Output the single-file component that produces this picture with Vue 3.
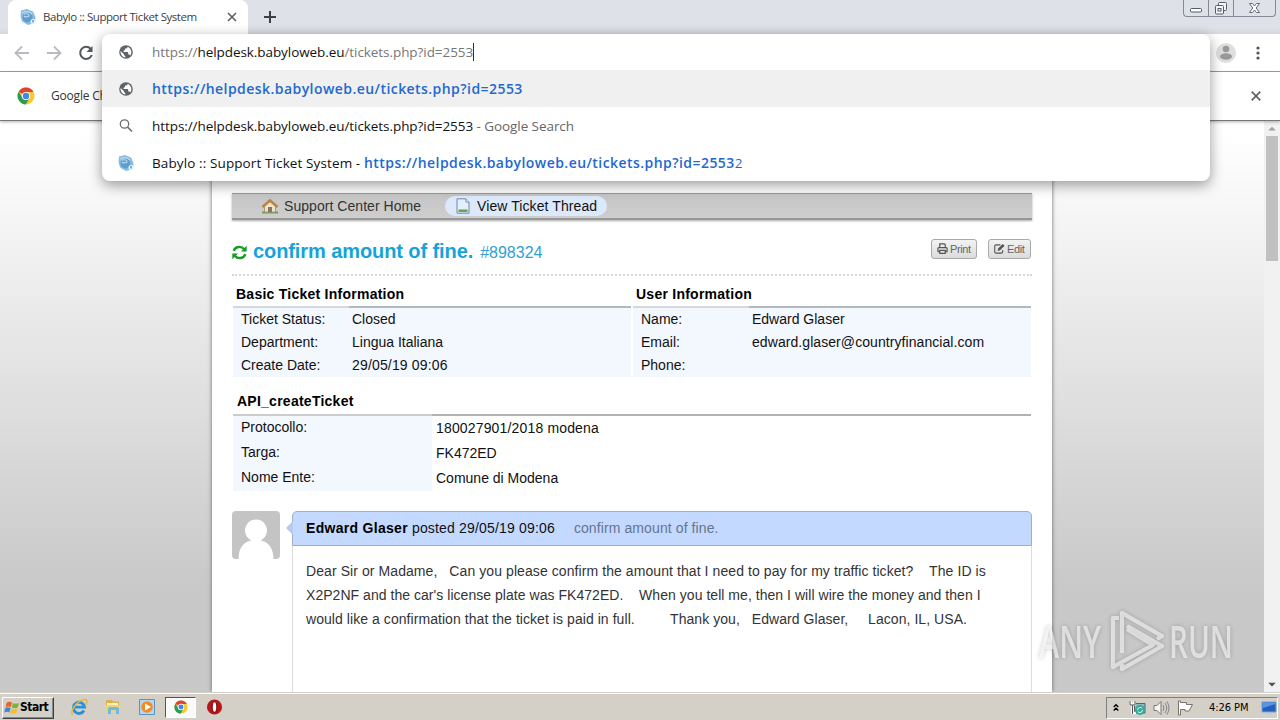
<template>
    <div class="screen">
        <!-- Pestañas del navegador -->
        <header class="tabstrip">
            <div class="tab">
                <svg class="favicon" viewBox="0 0 16 16"><use href="#babylo" /></svg>
                <span class="tab-title">Babylo :: Support Ticket System</span>
                <svg class="tab-close" viewBox="0 0 10 10"><path d="M1 1L9 9M9 1L1 9" stroke="#5f6368" stroke-width="1.7" /></svg>
            </div>
            <svg class="new-tab" viewBox="0 0 12 12"><path d="M6 0V12M0 6H12" stroke="#3c4043" stroke-width="2" /></svg>
            <div class="window-buttons">
                <span class="minimize"><svg width="14" height="16"><rect x="1.5" y="8.500" width="11" height="3.500" rx="1" fill="#fff" stroke="#555b6e" /></svg></span>
                <span class="restore"><svg width="14" height="16"><g fill="#f6f6f8" stroke="#555b6e"><rect x="4.500" y="2.500" width="8" height="8" rx="1" /><rect x="1.500" y="5.500" width="8" height="8.500" rx="1" /><rect x="4" y="8.500" width="3" height="2.500" /></g></svg></span>
                <span class="close"><svg width="13" height="16"><path d="M1.500 3.500H4.500L6.500 6L8.500 3.500H11.500L8.200 8L11.500 12.500H8.500L6.500 10L4.500 12.500H1.500L4.800 8Z" fill="#fff" stroke="#666b7b" /></svg></span>
            </div>
        </header>

        <div class="toolbar">
            <svg class="nav-icon" viewBox="0 0 16 16"><path d="M15 8H2M8 1.500L1.500 8L8 14.500" fill="none" stroke="#b9bbbe" stroke-width="1.800" /></svg>
            <svg class="nav-icon" viewBox="0 0 16 16"><path d="M1 8H14M8 1.500L14.500 8L8 14.500" fill="none" stroke="#b9bbbe" stroke-width="1.800" /></svg>
            <svg class="nav-icon" viewBox="0 0 16 16"><path d="M12.600 3.800A6 6 0 1 0 13.800 10" fill="none" stroke="#55585c" stroke-width="2" /><path d="M14.500 1V7H8.500Z" fill="#55585c" /></svg>
            <svg class="avatar-icon" viewBox="0 0 20 20"><circle cx="10" cy="10" r="10" fill="#dedede" /><circle cx="10" cy="6" r="3.300" fill="#999" /><ellipse cx="10" cy="13.500" rx="6" ry="3.300" fill="#999" /></svg>
            <svg class="dots-icon" viewBox="0 0 4 14"><g fill="#505357"><circle cx="2" cy="2" r="1.600" /><circle cx="2" cy="7" r="1.600" /><circle cx="2" cy="12" r="1.600" /></g></svg>
        </div>

        <div class="infobar">
            <svg class="chrome-icon" viewBox="0 0 18 18"><use href="#chrome" /></svg>
            <span>Google Ch</span>
            <svg class="infobar-close" viewBox="0 0 10 10"><path d="M.7.700L9.300 9.300M9.300.700L.7 9.300" stroke="#5f6368" stroke-width="1.700" /></svg>
        </div>

        <!-- Sugerencias de la barra de direcciones -->
        <div class="omnibox">
            <div class="omni-row input">
                <svg class="omni-icon" viewBox="0 0 16 16"><use href="#globe" /></svg>
                <span class="url"><i>https://</i>helpdesk.babyloweb.eu<i>/tickets.php?id=2553</i></span><span class="caret"></span>
            </div>
            <div class="omni-row selected">
                <svg class="omni-icon" viewBox="0 0 16 16"><use href="#globe" /></svg>
                <b>https://helpdesk.babyloweb.eu/tickets.php?id=2553</b>
            </div>
            <div class="omni-row">
                <svg class="omni-icon" viewBox="0 0 16 16"><circle cx="6.500" cy="6" r="4.200" fill="none" stroke="#6b6e72" stroke-width="1.300" /><path d="M9.500 9L14 13.500" stroke="#6b6e72" stroke-width="1.700" /></svg>
                <span class="url">https://helpdesk.babyloweb.eu/tickets.php?id=2553</span><span class="hint">&nbsp;- Google Search</span>
            </div>
            <div class="omni-row">
                <svg class="omni-icon" viewBox="0 0 16 16"><use href="#babylo" /></svg>
                <span class="page-title">Babylo :: Support Ticket System -&nbsp;</span><b>https://helpdesk.babyloweb.eu/tickets.php?id=2553</b><span class="last-digit">2</span>
            </div>
        </div>

        <main class="viewport">
            <div class="page">
                <div class="container">
                    <nav class="menu">
                        <a class="menu-home">
                            <svg viewBox="0 0 18 16"><path d="M1 14.500H17" stroke="#6f9f55" stroke-width="2" /><path d="M3.500 8L9 3L14.500 8V14H3.500Z" fill="#eee4cc" stroke="#a8987a" /><path d="M7 14V9H11V14" fill="#887660" /><path d="M1.500 9L9 2.500L16.500 9" fill="none" stroke="#b98545" stroke-width="2.600" /></svg>
                            <span>Support Center Home</span>
                        </a>
                        <a class="menu-thread">
                            <svg viewBox="0 0 14 16"><path d="M1 .800H10L13 4V15.200H1Z" fill="#e3effc" stroke="#7188a8" /><path d="M10 1V4H13" fill="#fff" stroke="#7188a8" /><path d="M2.500 11.500H11.500V14H2.500Z" fill="#69a348" /></svg>
                            <span>View Ticket Thread</span>
                        </a>
                    </nav>

                    <div class="title-row">
                        <svg class="refresh" viewBox="0 0 14 14"><g fill="none" stroke="#149d25" stroke-width="2.300"><path d="M1.600 5.500C3 1.200 8.500.600 11.200 3.800" /><path d="M12.400 8.500C11 12.800 5.500 13.400 2.800 10.200" /></g><path d="M13.700.700V6H8.400ZM.3 13.300V8H5.600Z" fill="#149d25" /></svg>
                        <h1>confirm amount of fine.</h1>
                        <small>#898324</small>
                        <button class="print"><svg viewBox="0 0 12 12"><path d="M3 5V1H8L9 2V5M1 9.500V6Q1 5 2 5H10Q11 5 11 6V9.500H9M3 9.500H1M3 8H9V11.300H3Z" fill="none" stroke="#555" stroke-width="1.300" /></svg><span>Print</span></button>
                        <button class="edit"><svg viewBox="0 0 12 12"><path d="M9.500 7.500V9.500Q9.500 11 8 11H2.300Q.8 11 .8 9.500V3.500Q.8 2 2.300 2H7" fill="none" stroke="#555" stroke-width="1.200" /><path d="M4 8.800L4.500 6L9.500 1L11.600 3L6.600 8Z" fill="#555" /></svg><span>Edit</span></button>
                    </div>

                    <div class="info-tables">
                        <section v-for="table in infoTables" :key="table.title" class="info-table">
                            <h2>{{ table.title }}</h2>
                            <dl>
                                <div v-for="row in table.rows" :key="row.label">
                                    <dt>{{ row.label }}</dt>
                                    <dd :class="row.name">{{ row.value }}</dd>
                                </div>
                            </dl>
                        </section>
                    </div>

                    <section class="custom-table">
                        <h2>API_createTicket</h2>
                        <dl>
                            <div v-for="row in customRows" :key="row.label">
                                <dt>{{ row.label }}</dt>
                                <dd :class="row.name">{{ row.value }}</dd>
                            </div>
                        </dl>
                    </section>

                    <article class="entry">
                        <svg class="user-avatar" viewBox="0 0 48 48"><rect width="48" height="48" rx="4" fill="#c4c4c4" /><path d="M6.500 48C6.500 36 13 30 19.500 29.500A11 11 0 1 1 28.500 29.500C35 30 41.500 36 41.500 48Z" fill="#fff" /></svg>
                        <div class="message">
                            <div class="message-header">
                                <b>Edward Glaser</b><span class="posted">posted 29/05/19 09:06</span><span class="subject">confirm amount of fine.</span>
                            </div>
                            <div class="message-body">
                                <p v-for="(line, i) in messageLines" :key="i" :class="'line-'+(i+1)">{{ line }}</p>
                            </div>
                        </div>
                    </article>
                </div>
            </div>
            <div class="scrollbar">
                <svg viewBox="0 0 16 16"><path d="M4 10L8 6L12 10Z" fill="#a0a0a0" /></svg>
                <div class="thumb"></div>
                <svg class="down" viewBox="0 0 16 16"><path d="M4 6L8 10L12 6Z" fill="#505050" /></svg>
            </div>
        </main>

        <!-- Marca de agua -->
        <svg class="watermark" viewBox="0 0 200 80">
            <g class="watermark-text">
                <text x="3" y="53" textLength="62" lengthAdjust="spacingAndGlyphs">ANY</text>
                <text x="133" y="53" textLength="64" lengthAdjust="spacingAndGlyphs">RUN</text>
            </g>
            <path class="watermark-logo" d="M83 13L77 13V62L117 40L91 24M86 48V8L126 31L121 34M86 59V64L126 41L91 21" />
        </svg>

        <footer class="taskbar">
            <div class="start">
                <svg viewBox="0 0 18 16"><path d="M3 2Q6 0 9 2L7.700 7Q5 5.500 1.800 7Z" fill="#e8642a" /><path d="M10 2.500Q13 4 17 2.500L15.500 7.500Q12 9 8.700 7.300Z" fill="#79b43c" /><path d="M1.500 8Q4.500 6.500 7.500 8L6 13Q3.500 11.500 .3 13Z" fill="#3c8bd0" /><path d="M8.500 8.500Q12 10 15.300 8.600L14 13.600Q10.500 15 7 13.500Z" fill="#f3bd2d" /></svg>
                <b>Start</b>
            </div>
            <svg class="task ie" viewBox="0 0 18 18"><path d="M14 12.500A5.600 5.600 0 1 1 14.600 9.200H5" fill="none" stroke="#2c8fd8" stroke-width="2.800" /><path d="M3 16.500C-1 15 6 3 14.500 1.500C17.500 1 17.500 4 16 6.500" fill="none" stroke="#e2b93c" stroke-width="1.500" /></svg>
            <svg class="task folder" viewBox="0 0 18 18"><path d="M2 2H8L9 3.500H15V14H2Z" fill="#d9b24e" /><path d="M3 5H14V9H3Z" fill="#fff3bd" /><path d="M1 7H16L15 14H2Z" fill="#f0d27a" /><path d="M4 16V11Q4 9 6 9H13Q15 9 15 11V16H12V12H7V16Z" fill="#6ebbe2" /></svg>
            <svg class="task media" viewBox="0 0 18 18"><path d="M1.500 1.500H16.500V16.500H1.500Z" fill="#b3d7f3" stroke="#5c91c2" /><circle cx="9" cy="9" r="5.800" fill="#f08c20" /><path d="M7 5.500L13 9L7 12.500Z" fill="#fff" /></svg>
            <div class="task active"><svg viewBox="0 0 18 18"><use href="#chrome" /></svg></div>
            <svg class="task opera" viewBox="0 0 18 18"><circle cx="9" cy="9" r="8" fill="#b6171b" /><ellipse cx="9" cy="9" rx="3.300" ry="6.200" fill="#8b1013" /><ellipse cx="9" cy="9" rx="1.800" ry="5" fill="#fff" /></svg>
            <div class="tray">
                <svg class="chevrons" viewBox="0 0 7 9"><path d="M.8 4L3.500 1.300L6.200 4M.8 8L3.500 5.300L6.200 8" fill="none" stroke="#000" stroke-width="1.500" /></svg>
                <svg class="network" viewBox="0 0 17 16"><path d="M5.500 3.500H16V13H5.500Z" fill="#8fb6bd" stroke="#53636a" /><path d="M1.500 1V4.500H5.500V1M3.500 4.500V13H7" fill="none" stroke="#fff" stroke-width="2.500" /><path d="M1 1V5H6V1M3.500 5V14" fill="none" stroke="#555" /><circle cx="11" cy="10" r="5" fill="#37aa9b" /><path d="M8.500 10A2.600 2.600 0 0 1 13.200 8.500M13.500 10A2.600 2.600 0 0 1 8.800 11.500" fill="none" stroke="#d7fff9" /></svg>
                <svg class="sound" viewBox="0 0 17 16"><path d="M1 5.500H4L8 1.500V14.500L4 10.500H1Z" fill="#f5f4ef" stroke="#777" /><path d="M10 5Q12 8 10 11M12 3Q15.500 8 12 13M14 1.500Q18 8 14 14.500" fill="none" stroke="#858585" /></svg>
                <svg class="flag" viewBox="0 0 17 16"><path d="M1.500 1V15H3.500V9.500H8V11H12L15.500 4.500H9.500V2.500H3.500V1Z" fill="#fff" stroke="#77736d" /></svg>
                <time>4:26 PM</time>
                <svg class="desktop" viewBox="0 0 16 15"><path d="M1 2L15 2V12H1Z" fill="#2460bb" stroke="#75a7df" /><path d="M1.500 2.500H14.500V4L2 8Z" fill="#5a96df" /><path d="M5 14H11" stroke="#b8c8dc" /></svg>
            </div>
        </footer>

        <svg class="symbols">
            <symbol id="globe" viewBox="0 0 16 16"><circle cx="8" cy="8" r="6.800" fill="#5f6368" /><path d="M2.600 7L6 10.200V11L7.300 12.300V13.400C4 13 2.200 10 2.600 7ZM9.500 2.700V3.300Q9.500 4.600 8.200 4.600H7V6L5.600 6.800V8H9.500Q10.200 8 10.200 8.700V10.500H11Q12 10.500 12.300 11.500C14.200 9 13.800 4.500 9.500 2.700Z" fill="#fff" /></symbol>
            <symbol id="babylo" viewBox="0 0 16 16"><path d="M1 1.500L7 0L13 2.500L15.500 8L15 14L8 16L2 12.500L.5 7Z" fill="#8dbcdf" /><circle cx="7.500" cy="8.500" r="5" fill="#5e9dce" /><path d="M2 4Q8 1 12 5M4 5Q9 4 9 7Q6 9 4 7" fill="none" stroke="#b9daf0" stroke-width="1.200" /><circle cx="13" cy="12.500" r="2.500" fill="#e9f4fb" /><path d="M13 11V13.500" stroke="#4c8fc4" stroke-width="1.400" /></symbol>
            <symbol id="chrome" viewBox="0 0 18 18"><circle cx="9" cy="9" r="8.500" fill="#f7ca2d" /><path d="M9 9L1.700 4.700A8.500 8.500 0 0 1 16.500 5H9Z" fill="#dc4437" /><path d="M9 9L5.500 11L1.700 4.700A8.500 8.500 0 0 0 8.700 17.500L12.500 11Z" fill="#2c9c52" /><circle cx="9" cy="9" r="4.100" fill="#fff" /><circle cx="9" cy="9" r="3.200" fill="#4384ec" /></symbol>
        </svg>
    </div>
</template>

<script setup>
    // Tablas con la información del ticket y del usuario
    const infoTables = [
        {
            title: 'Basic Ticket Information',
            rows: [
                { label: 'Ticket Status:', value: 'Closed' },
                { label: 'Department:', value: 'Lingua Italiana' },
                { label: 'Create Date:', value: '29/05/19 09:06', name: 'date' }
            ]
        },
        {
            title: 'User Information',
            rows: [
                { label: 'Name:', value: 'Edward Glaser' },
                { label: 'Email:', value: 'edward.glaser@countryfinancial.com', name: 'email' },
                { label: 'Phone:', value: '' }
            ]
        }
    ];

    // Campos propios del formulario
    const customRows = [
        { label: 'Protocollo:', value: '180027901/2018 modena', name: 'date' },
        { label: 'Targa:', value: 'FK472ED' },
        { label: 'Nome Ente:', value: 'Comune di Modena' }
    ];

    // Los espacios múltiples forman parte del mensaje
    const messageLines = [
        'Dear Sir or Madame,   Can you please confirm the amount that I need to pay for my traffic ticket?    The ID is',
        "X2P2NF and the car's license plate was FK472ED.    When you tell me, then I will wire the money and then I",
        'would like a confirmation that the ticket is paid in full.         Thank you,   Edward Glaser,     Lacon, IL, USA.'
    ];
</script>

<style>
body {
  margin: 0;
  overflow: hidden;
}
</style>

<style scoped>
.screen {
  position: relative;
  display: flex;
  flex-direction: column;
  width: 1280px;
  height: 720px;
  overflow: hidden;
  background: #fff;
  font-family: "Liberation Sans", Arial, sans-serif;
  font-size: 14px;
  color: #111;
  white-space: nowrap;
}

svg {
  display: block;
  flex: none;
}

h1, h2, dl, dd, p {
  margin: 0;
}

.symbols {
  position: absolute;
  width: 0;
  height: 0;
}

/* Navegador */
.tabstrip {
  display: flex;
  flex: none;
  height: 34px;
  box-sizing: border-box;
  padding-left: 8px;
  background: linear-gradient(#dee1e8 28px, #d5d7dc);
}

.tab {
  display: flex;
  align-items: center;
  width: 240px;
  box-sizing: border-box;
  padding: 0 12px;
  background: #fff;
  border-radius: 8px 8px 0 0;
}

.favicon {
  width: 16px;
  height: 16px;
}

.tab-title {
  margin: -2px 0 0 7px;
  font: 11.5px "Open Sans", sans-serif;
  letter-spacing: -0.45px;
  color: #3c4043;
}

.tab-close {
  width: 10px;
  height: 10px;
  margin-left: auto;
  margin-right: -1px;
}

.new-tab {
  width: 12px;
  height: 12px;
  margin: 11px 0 0 16px;
}

.window-buttons {
  display: flex;
  width: 91px;
  height: 16px;
  margin: 0 4px 0 auto;
  border: 1px solid #858995;
  border-top: 0;
  border-radius: 0 0 4px 4px;
}

.window-buttons span {
  display: flex;
  justify-content: center;
  width: 24px;
  border-right: 1px solid #858995;
}

.window-buttons .close {
  width: 41px;
  border: 0;
}

.toolbar {
  display: flex;
  flex: none;
  align-items: center;
  height: 38px;
  box-sizing: border-box;
  padding-left: 14px;
  gap: 16px;
  border-bottom: 1px solid #a0a0a0;
}

.nav-icon {
  width: 16px;
  height: 16px;
}

.avatar-icon {
  width: 20px;
  height: 20px;
  margin-left: auto;
}

.dots-icon {
  width: 4px;
  height: 14px;
  margin: 0 20px 0 4px;
}

.infobar {
  display: flex;
  flex: none;
  align-items: center;
  position: relative;
  z-index: 1;
  height: 49px;
  box-sizing: border-box;
  padding: 0 19px 0 17px;
  border-bottom: 1px solid #777;
  box-shadow: 0 1px 3px rgba(0, 0, 0, .3);
  background: #fff;
  font: 12px "Open Sans", sans-serif;
  letter-spacing: -.2px;
  color: #333;
}

.infobar span {
  margin-top: -2px;
}

.chrome-icon {
  width: 18px;
  height: 18px;
  margin-right: 16px;
}

.infobar-close {
  width: 10px;
  height: 10px;
  margin-left: auto;
}

.omnibox {
  position: absolute;
  z-index: 5;
  left: 102px;
  top: 34px;
  width: 1108px;
  height: 147px;
  border-radius: 8px;
  background: #fff;
  box-shadow: 0 4px 14px rgba(0, 0, 0, .4);
  font: 13.5px "Open Sans", sans-serif;
}

.omni-row {
  display: flex;
  align-items: center;
  height: 37px;
  padding-left: 16px;
}

.omni-row.input {
  height: 36px;
}

.omni-row.selected {
  background: #f0f0f0;
}

.omni-icon {
  width: 16px;
  height: 16px;
  margin-right: 18px;
}

.omni-row i {
  font-style: normal;
  color: #777;
}

.omni-row b {
  font-size: 14px;
  font-weight: 600;
  letter-spacing: .44px;
  color: #2368ce;
}

.url {
  letter-spacing: -.07px;
}

.page-title {
  letter-spacing: .11px;
}

.caret {
  width: 1px;
  height: 18px;
  background: #333;
}

.hint {
  letter-spacing: -.07px;
  color: #666;
}

.last-digit {
  color: #2368ce;
}

/* Página de soporte */
.viewport {
  display: flex;
  height: 571px;
}

.page {
  display: flex;
  justify-content: center;
  width: 1264px;
  background: linear-gradient(#fff 0, #fff 15px, #c8c8c8 470px);
}

.container {
  width: 800px;
  height: 571px;
  padding: 0 20px;
  overflow: hidden;
  background: #fff;
  box-shadow: 0 0 4px #666;
}

.menu {
  display: flex;
  align-items: center;
  height: 27px;
  box-sizing: border-box;
  margin-top: 72px;
  padding-left: 29px;
  border-top: 1px solid #999;
  border-bottom: 2px solid #979797;
  background: linear-gradient(#c5c5c5, #cecece);
  box-shadow: 0 1px 2px #aaa;
}

.menu a {
  display: flex;
  align-items: center;
}

.menu-home svg {
  width: 18px;
  height: 16px;
  margin-right: 5px;
}

.menu-home {
  width: 184px;
  color: #333;
}

.menu-home span {
  letter-spacing: .05px;
}

.menu-thread {
  width: 162px;
  height: 20px;
  box-sizing: border-box;
  padding-left: 11px;
  border-radius: 10px;
  background: #dce9fa;
  letter-spacing: .09px;
}

.menu-thread svg {
  width: 14px;
  height: 16px;
  margin-right: 7px;
}

.title-row {
  display: flex;
  align-items: center;
  height: 56px;
  box-sizing: border-box;
  padding: 8px 1px 0 0;
  border-bottom: 2px dotted #d8d8d8;
}

.refresh {
  width: 15px;
  height: 15px;
  margin: 3px 6px 0 0;
}

h1 {
  font-size: 20px;
  line-height: 24px;
  letter-spacing: -.09px;
  color: #14a3dc;
}

small {
  margin: 3px 0 0 7px;
  font-size: 16px;
  color: #329fd0;
}

button {
  display: flex;
  align-items: center;
  height: 20px;
  box-sizing: border-box;
  margin-top: -5px;
  padding: 0 5px;
  border: 1px solid #aaa;
  border-radius: 3px;
  background: linear-gradient(#f2f2f2, #dcdcdc);
  font: 11px "Liberation Sans", Arial, sans-serif;
  letter-spacing: -.4px;
  color: #666;
}

button svg {
  width: 11px;
  height: 11px;
  margin-right: 2px;
}

.print {
  width: 46px;
  margin-left: auto;
  margin-right: 11px;
}

.edit {
  width: 43px;
}

.info-tables {
  display: flex;
  gap: 2px;
  padding: 0 1px;
}

.info-table {
  width: 398px;
}

h2 {
  font-size: 14px;
  line-height: 30px;
  letter-spacing: .25px;
  color: #000;
}

.info-table h2 {
  height: 30px;
  padding: 3px 0 0 3px;
  box-sizing: border-box;
}

.info-table dl,
.custom-table dl {
  padding-top: 2px;
}

.info-table dl {
  background: linear-gradient(90deg, #d5d9df 116px, #b0b8c0 116px) 0 0 / 100% 2px no-repeat #f3f7fe;
}

.info-table dl div {
  display: flex;
  height: 23px;
  line-height: 22px;
}

.info-table dt {
  width: 111px;
  padding-left: 8px;
}

.date {
  letter-spacing: .16px;
}

.email {
  letter-spacing: .07px;
}

.custom-table {
  padding: 0 1px;
}

.custom-table h2 {
  height: 37px;
  padding: 9px 0 0 4px;
  box-sizing: border-box;
}

.custom-table dl {
  background: linear-gradient(90deg, #ccc 199px, #b2b2b2 199px) 0 0 / 100% 2px no-repeat;
}

.custom-table dl div {
  display: flex;
  height: 25px;
}

.custom-table dt {
  width: 191px;
  padding-left: 8px;
  line-height: 22px;
  background: #f3f7fe;
}

.custom-table dd {
  padding-left: 4px;
  line-height: 25px;
}

.entry {
  display: flex;
  margin-top: 20px;
}

.user-avatar {
  width: 48px;
  height: 48px;
  margin-right: 12px;
}

.message {
  width: 740px;
}

.message-header {
  position: relative;
  display: flex;
  align-items: center;
  height: 35px;
  box-sizing: border-box;
  padding: 0 0 2px 13px;
  border: 1px solid #9eaeca;
  border-radius: 5px 5px 0 0;
  background: #c3d9ff;
}

.message-header::before {
  content: "";
  position: absolute;
  left: -7px;
  top: 9px;
  border: 7px solid transparent;
  border-left: 0;
  border-right-color: #b9c9ea;
}

.message-header b {
  letter-spacing: .3px;
  color: #000;
}

.posted {
  margin-left: 4px;
  letter-spacing: .17px;
}

.subject {
  margin-left: 19px;
  letter-spacing: .1px;
  color: #66758e;
}

.message-body {
  height: 200px;
  padding: 13px;
  border: 1px solid #ddd;
  border-top: 0;
  color: #333;
}

.message-body p {
  line-height: 24px;
  white-space: pre;
}

.line-1 {
  letter-spacing: .08px;
}

.line-2 {
  letter-spacing: .04px;
}

.line-3 {
  letter-spacing: .06px;
}

.scrollbar {
  display: flex;
  flex-direction: column;
  width: 16px;
  background: #f1f1f1;
}

.scrollbar svg {
  width: 16px;
  height: 15px;
}

.thumb {
  width: 12px;
  height: 125px;
  margin-left: 2px;
  background: #c1c1c1;
}

.scrollbar .down {
  margin-top: auto;
}

.watermark {
  position: absolute;
  z-index: 4;
  left: 1036px;
  top: 605px;
  width: 200px;
  height: 80px;
  overflow: visible;
  filter: drop-shadow(0 0 2px rgba(0, 0, 0, .35));
}

.watermark-text {
  font: 600 46px "Open Sans", sans-serif;
  fill: rgba(255, 255, 255, .6);
}

.watermark-logo {
  fill: none;
  stroke: rgba(255, 255, 255, .58);
  stroke-width: 4.2px;
  stroke-linejoin: round;
}

/* Barra de tareas */
.taskbar {
  display: flex;
  align-items: center;
  height: 28px;
  box-sizing: border-box;
  padding-left: 2px;
  border-top: 1px solid #d4d0c8;
  background: #d4d0c8;
  box-shadow: inset 0 1px #fff;
}

.start {
  display: flex;
  align-items: center;
  width: 52px;
  height: 22px;
  margin-top: 2px;
  box-sizing: border-box;
  padding-left: 1px;
  border: 1px solid;
  border-color: #fff #404040 #404040 #fff;
  box-shadow: inset -1px -1px #888;
  font: 12px "DejaVu Sans Condensed", sans-serif;
  color: #000;
}

.start svg {
  width: 16px;
  height: 16px;
}

.start b {
  margin-top: -2px;
  letter-spacing: -.5px;
}

.task {
  width: 18px;
  height: 18px;
  margin-left: 16px;
}

.task.active {
  display: flex;
  align-items: center;
  justify-content: center;
  width: 31px;
  height: 21px;
  margin-left: 9px;
  margin-top: 1px;
  box-sizing: border-box;
  border: 1px solid;
  border-color: #555 #fff #fff #555;
  background: #fafafa;
}

.task.active svg {
  width: 14px;
  height: 14px;
}

.task.opera {
  width: 17px;
  margin-left: 10px;
}

.tray {
  display: flex;
  align-items: center;
  width: 172px;
  height: 22px;
  box-sizing: border-box;
  margin: 2px 2px 0 auto;
  padding-left: 6px;
  border: 1px solid;
  border-color: #808080 #fff #fff #808080;
  font: 11px "DejaVu Sans Condensed", sans-serif;
  color: #000;
}

.chevrons {
  width: 6px;
  height: 9px;
  margin-right: 10px;
}

.network,
.sound,
.flag {
  width: 17px;
  height: 16px;
  margin-right: 7px;
}

.tray time {
  margin-left: 8px;
  letter-spacing: -.05px;
}

.desktop {
  width: 16px;
  height: 15px;
  margin-left: auto;
}
</style>
